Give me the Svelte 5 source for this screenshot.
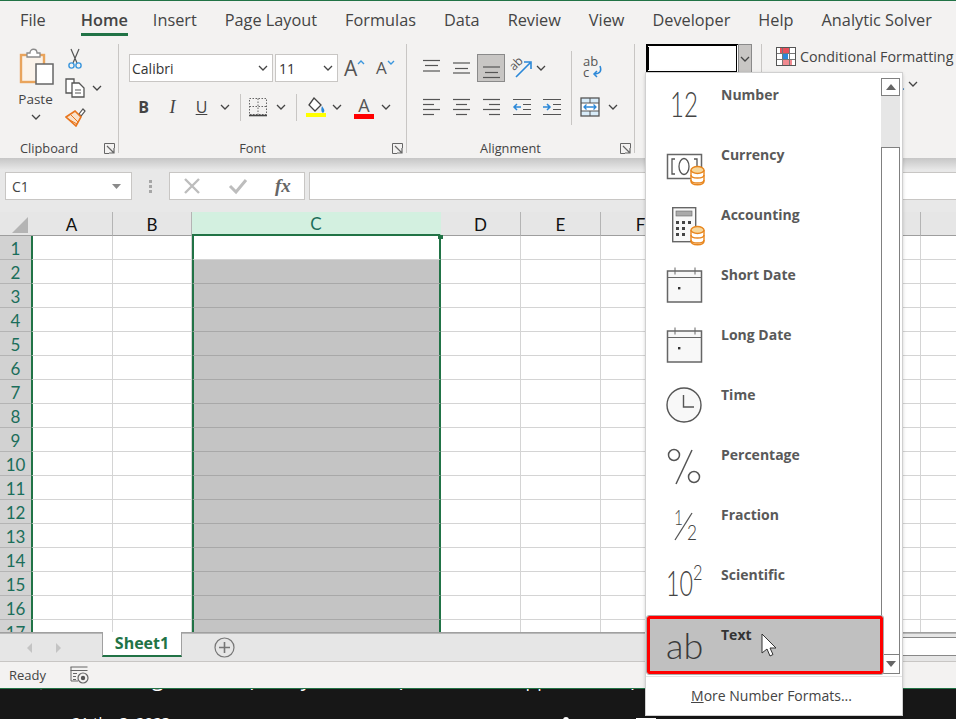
<script>
  const tabs = ['File', 'Home', 'Insert', 'Page Layout', 'Formulas', 'Data', 'Review', 'View', 'Developer', 'Help', 'Analytic Solver'];
  const cols = ['A', 'B', 'C', 'D', 'E', 'F', 'G', 'H', 'I', 'J'];
  const rows = Array.from({ length: 17 }, (_, i) => i + 1);
  const formats = ['Number', 'Currency', 'Accounting', 'Short Date', 'Long Date', 'Time', 'Percentage', 'Fraction', 'Scientific', 'Text'];

  // alignment icons: [x1, x2, y]
  const alignTop = [[2, 19, 2.5], [4, 17, 7.5], [2, 19, 13]];
  const alignMid = [[2, 19, 5], [4, 17, 10.5], [2, 19, 15]];
  const alignBot = [[2, 19, 9], [4, 17, 14.5], [2, 19, 19.5]];
  const left = [[2, 19, 2.5], [2, 13, 7.5], [2, 19, 12.5], [2, 13, 17.5]];
  const center = [[2, 19, 2.5], [5, 16, 7.5], [2, 19, 12.5], [5, 16, 17.5]];
  const right = [[2, 19, 2.5], [8, 19, 7.5], [2, 19, 12.5], [8, 19, 17.5]];
</script>

{#snippet chev()}
  <svg class="chev" width="10" height="6" viewBox="0 0 10 6"><path d="M1 1l4 4 4-4" fill="none" stroke="#444" stroke-width="1.3" /></svg>
{/snippet}

{#snippet launcher()}
  <svg width="11" height="11" viewBox="0 0 11 11" fill="none" stroke="#666"><path d="M10.5 5V.5H.5v10H5" /><path d="M3 3l6.5 6.5M10 5v5H5" stroke-width="1.2" /></svg>
{/snippet}

{#snippet bars(list)}
  <svg width="21" height="21" viewBox="0 0 21 21" stroke="#555" stroke-width="1.2">
    {#each list as b}<line x1={b[0]} x2={b[1]} y1={b[2]} y2={b[2]} />{/each}
  </svg>
{/snippet}

{#snippet coins()}
  <g stroke="#e8861e" stroke-width="1.4" fill="#fff">
    <path d="M37 36v11c0 5 13 5 13 0V36" />
    <path d="M37 41c0 4 13 4 13 0M37 46c0 4 13 4 13 0" fill="none" />
    <ellipse cx="43.5" cy="36" rx="6.5" ry="3.5" fill="#f6d79c" />
  </g>
{/snippet}

{#snippet calendar()}
  <g stroke="#666" fill="none">
    <rect x="13.5" y="17" width="34" height="31" fill="#f8f8f8" stroke-width="1.5" />
    <path d="M13 23.5h35M21 13.5v7M41 13.5v7" />
    <rect x="24" y="33" width="2.4" height="2.4" fill="#333" stroke="none" />
  </g>
{/snippet}

<div class="page">
  <div class="topline"></div>

  <nav class="tabs">
    {#each tabs as t}
      <span class="tab" class:active={t === 'Home'}>{t}</span>
    {/each}
  </nav>

  <div class="ribbon">
    <section class="group clipboard">
      <div class="clipbody">
        <div class="paste">
          <svg width="36" height="37" viewBox="0 0 36 37">
            <rect x="2" y="7" width="23" height="27" fill="#fbf3ea" stroke="#e9a45c" stroke-width="2.4" />
            <path d="M8 9V5h3c0-5 7-5 7 0h3v4z" fill="#fff" stroke="#8a8a8a" stroke-width="1.3" />
            <rect x="17" y="16" width="17" height="20" fill="#fff" stroke="#666" stroke-width="1.5" />
          </svg>
          <span class="pastelabel">Paste</span>
          {@render chev()}
        </div>
        <div class="smalls">
          <div class="small">
            <svg width="20" height="22" viewBox="0 0 20 22" fill="none">
              <path d="M6 1l6 14M14 1L8 15" stroke="#555" stroke-width="1.2" />
              <circle cx="6.5" cy="17.5" r="2.6" stroke="#3a96dd" stroke-width="1.4" />
              <circle cx="13.5" cy="17.5" r="2.6" stroke="#3a96dd" stroke-width="1.4" />
            </svg>
          </div>
          <div class="small">
            <svg width="20" height="20" viewBox="0 0 20 20" fill="#fff" stroke="#555" stroke-width="1.3">
              <path d="M1 1h8v14H1z" />
              <path d="M7 5h7l5 5v9H7z" />
              <path d="M10 12h6M10 15h6" stroke-width="1" />
            </svg>
            <span class="copychev">{@render chev()}</span>
          </div>
          <div class="small">
            <svg width="21" height="20" viewBox="0 0 21 20">
              <path d="M14 7l4-5 2 2-4 5z" fill="#fff" stroke="#555" stroke-width="1.2" />
              <path d="M1 10l9-6 6 6-5 9z" fill="#f9e3cd" stroke="#e8761e" stroke-width="1.6" />
              <path d="M3 12l9 5M6 8l7 7" stroke="#e8761e" />
            </svg>
          </div>
        </div>
      </div>
      <footer><span>Clipboard</span><i>{@render launcher()}</i></footer>
    </section>

    <section class="group font">
      <div class="grouprows">
        <div class="row">
          <div class="combo fontname"><span>Calibri</span>{@render chev()}</div>
          <div class="combo fontsize"><span>11</span>{@render chev()}</div>
          <span class="growa big">A<svg width="8" height="5" viewBox="0 0 8 5"><path d="M1 4l3-3 3 3" fill="none" stroke="#3a96dd" stroke-width="1.4" /></svg></span>
          <span class="growa smallA">A<svg width="8" height="5" viewBox="0 0 8 5"><path d="M1 1l3 3 3-3" fill="none" stroke="#3a96dd" stroke-width="1.4" /></svg></span>
        </div>
        <div class="row">
          <span class="btn b29 bold">B</span>
          <span class="btn b29 ital">I</span>
          <span class="btn b29 under">U</span>
          <span class="btn b18">{@render chev()}</span>
          <span class="sep s240"></span>
          <span class="btn b24">
            <svg width="20" height="20" viewBox="0 0 20 20" fill="none" stroke="#666"><path d="M1.5 1.5h17v16h-17zM10 1.5v16M1.5 9.5h17" stroke-dasharray="1.5 1.5" /><path d="M1 18.5h18" stroke-width="1.6" stroke="#444" /></svg>
          </span>
          <span class="btn b22">{@render chev()}</span>
          <span class="sep s296"></span>
          <span class="btn b32 fill">
            <svg width="20" height="20" viewBox="0 0 20 20"><path d="M8 1l7 7-6 6-6-6z" fill="#fff" stroke="#444" stroke-width="1.3" /><path d="M16 9c2 3 3 4 2 6s-4 0-2-6z" fill="#2b88d8" /><rect y="16" width="20" height="4" fill="#ffff00" /></svg>
          </span>
          <span class="btn b10">{@render chev()}</span>
          <span class="btn b28 color">A<i></i></span>
          <span class="btn b16">{@render chev()}</span>
        </div>
      </div>
      <footer><span>Font</span><i>{@render launcher()}</i></footer>
    </section>

    <section class="group alignment">
      <div class="grouprows">
        <div class="row">
          <span class="btn b30">{@render bars(alignTop)}</span>
          <span class="btn b30">{@render bars(alignMid)}</span>
          <span class="btn b30 pressed">{@render bars(alignBot)}</span>
          <span class="btn b30">
            <svg width="22" height="22" viewBox="0 0 22 22" fill="none"><path d="M6 20L20 6M14 5h7v7" stroke="#2b88d8" stroke-width="1.6" /><text x="0" y="11" transform="rotate(-45 6 8)" class="orient">ab</text></svg>
          </span>
          <span class="btn b10">{@render chev()}</span>
          <span class="sep s571"></span>
          <span class="btn b28">
            <svg width="22" height="24" viewBox="0 0 22 24"><text x="2" y="10" class="wraptxt">ab</text><text x="2" y="21" class="wraptxt">c</text><path d="M19 10c2 5 0 8-6 8M16 15l-3 3 3 3" fill="none" stroke="#2b88d8" stroke-width="1.5" /></svg>
          </span>
        </div>
        <div class="row">
          <span class="btn b30">{@render bars(left)}</span>
          <span class="btn b30">{@render bars(center)}</span>
          <span class="btn b30">{@render bars(right)}</span>
          <span class="btn b31">
            <svg width="20" height="20" viewBox="0 0 20 20" fill="none" stroke="#555" stroke-width="1.2"><path d="M1 2.5h18M11 7.5h8M11 12.5h8M1 17.5h18" /><path d="M9 10H2M5 7l-3 3 3 3" stroke="#2b88d8" stroke-width="1.5" /></svg>
          </span>
          <span class="btn b30">
            <svg width="20" height="20" viewBox="0 0 20 20" fill="none" stroke="#555" stroke-width="1.2"><path d="M1 2.5h18M11 7.5h8M11 12.5h8M1 17.5h18" /><path d="M1 10h7M5 7l3 3-3 3" stroke="#2b88d8" stroke-width="1.5" /></svg>
          </span>
          <span class="sep s572"></span>
          <span class="btn b26">
            <svg width="20" height="20" viewBox="0 0 20 20" fill="none"><rect x="1" y="1" width="18" height="18" fill="#d8ecf9" stroke="#555" stroke-width="1.3" /><rect x="2" y="6" width="16" height="8" fill="#fff" /><path d="M1 6h18M1 14h18M10 1v5M10 14v5" stroke="#555" /><path d="M4 10h12M6.5 7.5L4 10l2.5 2.5M13.5 7.5L16 10l-2.5 2.5" stroke="#2b88d8" stroke-width="1.3" /></svg>
          </span>
          <span class="btn b20">{@render chev()}</span>
        </div>
      </div>
      <footer><span>Alignment</span><i>{@render launcher()}</i></footer>
    </section>

    <section class="group number">
      <div class="numcombo">
        <div class="numinput"><span class="caret"></span></div>
        <div class="numdrop">{@render chev()}</div>
      </div>
    </section>

    <section class="styles">
      <div class="condrow">
        <svg width="20" height="19" viewBox="0 0 20 19">
          <rect x=".5" y=".5" width="19" height="18" fill="#fff" stroke="#555" />
          <rect x="4" y="1" width="9" height="5" fill="#e8505b" />
          <rect x="7" y="7" width="5" height="5" fill="#2b88d8" />
          <rect x="7" y="13" width="9" height="5" fill="#f08a90" />
          <path d="M1 6.5h18M1 12.5h18M6.5 1v17M13.5 1v17" stroke="#777" fill="none" />
        </svg>
        <span>Conditional Formatting</span>
      </div>
      <div class="stylerow"><span>.</span>{@render chev()}</div>
    </section>
  </div>

  <div class="formulabar">
    <div class="namebox">
      <span>C1</span>
      <svg width="9" height="5" viewBox="0 0 9 5"><path d="M0 0h9L4.5 5z" fill="#8a8a8a" /></svg>
    </div>
    <div class="grip"><i></i><i></i><i></i></div>
    <div class="fxbox">
      <svg width="18" height="18" viewBox="0 0 18 18"><path d="M2 2l14 14M16 2L2 16" stroke="#bdbdbd" stroke-width="2.4" /></svg>
      <svg width="20" height="18" viewBox="0 0 20 18"><path d="M2 9l6 6L18 3" fill="none" stroke="#bdbdbd" stroke-width="3" /></svg>
      <span class="fx">fx</span>
    </div>
    <div class="formula"></div>
  </div>

  <div class="sheet">
    <div class="head corner"><svg width="17" height="17" viewBox="0 0 17 17"><path d="M16 0v16H0z" fill="#b4b4b4" /></svg></div>
    {#each cols as c}
      <div class="head" class:sel={c === 'C'}>{c}</div>
    {/each}
    {#each rows as r}
      <div class="rowhead">{r}</div>
      {#each cols as c}
        <div
          class="cell"
          class:first={c === 'A'}
          class:colc={c === 'C'}
          class:filled={c === 'C' && r > 1}
        >
          {#if c === 'C' && r === 1}<span class="handle"></span>{/if}
        </div>
      {/each}
    {/each}
  </div>

  <div class="sheetbar">
    <div class="navs">
      <svg width="7" height="12" viewBox="0 0 7 12"><path d="M6 1v10L1 6z" fill="#c4c4c4" /></svg>
      <svg width="7" height="12" viewBox="0 0 7 12"><path d="M1 1v10l5-5z" fill="#c4c4c4" /></svg>
    </div>
    <div class="sheettab">Sheet1</div>
    <svg class="plus" width="21" height="21" viewBox="0 0 21 21" fill="none" stroke="#777"><circle cx="10.5" cy="10.5" r="9.5" stroke-width="1.2" /><path d="M10.5 5v11M5 10.5h11" stroke-width="1.6" /></svg>
    <div class="hscroll"></div>
  </div>

  <div class="status">
    <span>Ready</span>
    <svg width="19" height="18" viewBox="0 0 19 18" fill="none" stroke="#666"><path d="M.5 1h17M.5 4.5h17M1 1v14h7" /><path d="M3 7.5h4M3 10.5h3M3 13.5h3" /><circle cx="13" cy="12" r="5" fill="#f3f2f1" stroke-width="1.2" /><circle cx="13" cy="12" r="2.2" fill="#555" stroke="none" /></svg>
  </div>

  <div class="behind">
    <p class="clipped">r Hiện số 0 trong Excel? bạn này có thể bạn chưa biết || Thủ thuật Excel</p>
    <div class="date">
      <span>21 thg 3, 2023</span>
      <i class="peak"></i>
      <i class="box"></i>
    </div>
  </div>

  <div class="popup">
    <div class="popbody">
      <ul>
        {#each formats as f, i}
          <li class:hot={f === 'Text'}>
            <svg width="60" height="60" viewBox="0 0 60 60">
              {#if i === 0}
                <text x="16" y="43" class="glyph g36" textLength="28" lengthAdjust="spacingAndGlyphs">12</text>
              {:else if i === 1}
                <rect x="13.5" y="20.5" width="34" height="24" fill="#fff" stroke="#666" stroke-width="1.5" />
                <path d="M21 25h-3v15h3M40 25h3v15h-3" fill="none" stroke="#555" stroke-width="1.3" />
                <ellipse cx="30" cy="32.5" rx="5" ry="8" fill="none" stroke="#555" stroke-width="1.3" />
                {@render coins()}
              {:else if i === 2}
                <rect x="18.7" y="13.7" width="23" height="34" fill="#f8f8f8" stroke="#666" stroke-width="1.4" />
                <rect x="22" y="17" width="16" height="5" fill="#aaa" stroke="#666" stroke-width=".6" />
                <path d="M22 27h3v3h-3zM28 27h3v3h-3zM34 27h3v3h-3zM22 33h3v3h-3zM28 33h3v3h-3zM22 39h3v3h-3zM28 39h3v3h-3z" fill="#444" />
                {@render coins()}
              {:else if i === 3 || i === 4}
                {@render calendar()}
              {:else if i === 5}
                <circle cx="30" cy="31" r="17" fill="#f8f8f8" stroke="#555" stroke-width="1.4" />
                <path d="M29.5 21v12H40" fill="none" stroke="#555" stroke-width="1.4" />
              {:else if i === 6}
                <circle cx="20" cy="21" r="5.5" fill="none" stroke="#555" stroke-width="1.5" />
                <circle cx="40" cy="43" r="5.5" fill="none" stroke="#555" stroke-width="1.5" />
                <path d="M38 16L22 50" stroke="#555" stroke-width="1.5" />
              {:else if i === 7}
                <text x="20" y="31" class="glyph g22" textLength="9" lengthAdjust="spacingAndGlyphs">1</text>
                <path d="M38 19L21 46" stroke="#555" stroke-width="1.3" />
                <text x="33" y="46" class="glyph g22" textLength="10" lengthAdjust="spacingAndGlyphs">2</text>
              {:else if i === 8}
                <text x="12" y="42" class="glyph g36" textLength="27" lengthAdjust="spacingAndGlyphs">10</text>
                <text x="39" y="26" class="glyph g22" textLength="9.5" lengthAdjust="spacingAndGlyphs">2</text>
              {:else}
                <text x="13" y="45" class="glyph g36 dark">ab</text>
              {/if}
            </svg>
            <span>{f}</span>
            {#if f === 'Text'}
              <svg class="cursor" width="16" height="25" viewBox="0 0 16 25"><path d="M1 1v19l5-4 3 7 3-1.5-3-6.5h6z" fill="#fff" stroke="#333" /></svg>
            {/if}
          </li>
        {/each}
      </ul>
      <div class="vscroll">
        <div class="sbtn"><svg width="10" height="6" viewBox="0 0 10 6"><path d="M0 6l5-6 5 6z" fill="#666" /></svg></div>
        <div class="strack"></div>
        <div class="sthumb"></div>
        <div class="sbtn down"><svg width="10" height="6" viewBox="0 0 10 6"><path d="M0 0l5 6 5-6z" fill="#666" /></svg></div>
      </div>
    </div>
    <div class="more"><u>M</u>ore Number Formats...</div>
  </div>
</div>

<style>
  :global(body) {
    margin: 0;
    background: #171717;
  }
  .page {
    position: relative;
    width: 956px;
    height: 719px;
    overflow: hidden;
    display: flex;
    flex-direction: column;
    font-family: "Open Sans", "Liberation Sans", sans-serif;
    color: #444;
  }
  .topline {
    height: 2px;
    flex: none;
    background: linear-gradient(#217346 50%, #f3f2f1 50%);
  }

  /* tabs */
  .tabs {
    flex: none;
    height: 36px;
    display: flex;
    gap: 28px;
    padding-left: 20px;
    background: #f3f2f1;
    font-size: 16.3px;
    line-height: 36px;
    white-space: nowrap;
  }
  .tab {
    height: 34px;
  }
  .tab.active {
    font-weight: 600;
    color: #444;
    border-bottom: 3px solid #217346;
    box-sizing: border-box;
    margin: 0 -3px 0 7px;
  }

  /* ribbon */
  .ribbon {
    flex: none;
    height: 120px;
    box-sizing: border-box;
    padding-top: 6px;
    display: flex;
    background: #f3f2f1;
    font-size: 14px;
  }
  .group {
    flex: none;
    box-sizing: border-box;
    height: 109px;
    border-right: 1px solid #c8c6c4;
    display: flex;
    flex-direction: column;
  }
  .clipboard { width: 119px; }
  .font { width: 288px; padding-left: 10px; }
  .alignment { width: 228px; padding-left: 9px; }
  .number { width: 127px; padding-left: 11px; }
  .group footer {
    margin-top: auto;
    margin-bottom: -3px;
    display: flex;
    align-items: center;
    height: 16px;
    font-size: 12.8px;
  }
  .font footer { margin-left: -10px; }
  .alignment footer { margin-left: -9px; }
  .group footer span {
    flex: 1;
    text-align: center;
  }
  .group footer i {
    width: 20px;
    display: flex;
    padding-left: 6px;
    box-sizing: border-box;
  }
  .chev {
    flex: none;
    display: block;
  }

  .clipbody {
    display: flex;
    padding-left: 19px;
  }
  .paste {
    width: 36px;
    padding-top: 4px;
    display: flex;
    flex-direction: column;
    align-items: center;
  }
  .pastelabel {
    margin: 6px 3px 0 0;
    line-height: 16px;
    font-size: 13.5px;
  }
  .paste .chev {
    margin: 7px 3px 0 0;
  }
  .smalls {
    margin-left: 10px;
  }
  .small {
    height: 29px;
    display: flex;
    align-items: center;
    position: relative;
  }
  .copychev {
    margin-left: 7px;
  }

  .grouprows {
    padding-top: 10px;
    display: flex;
    flex-direction: column;
    gap: 11px;
  }
  .row {
    height: 28px;
    display: flex;
    align-items: center;
  }
  .combo {
    box-sizing: border-box;
    height: 28px;
    background: #fff;
    border: 1px solid #c8c6c4;
    display: flex;
    align-items: center;
    justify-content: space-between;
    padding: 0 4px 0 2px;
    font-size: 14px;
    color: #333;
  }
  .fontname { width: 144px; margin-right: 2px; }
  .fontsize { width: 63px; padding-left: 3px; }
  .growa {
    display: flex;
    line-height: 28px;
    color: #555;
    align-items: flex-start;
  }
  .growa svg { margin-top: 6px; }
  .big { font-size: 21px; margin-left: 6px; width: 32px; }
  .smallA { font-size: 17px; }
  .btn {
    flex: none;
    height: 28px;
    box-sizing: border-box;
    display: flex;
    align-items: center;
    justify-content: center;
  }
  .b10 { width: 10px; }
  .b16 { width: 16px; }
  .b18 { width: 18px; }
  .b20 { width: 20px; }
  .b22 { width: 22px; }
  .b24 { width: 24px; }
  .b26 { width: 26px; }
  .b28 { width: 28px; }
  .b29 { width: 29px; }
  .b30 { width: 30px; }
  .b31 { width: 31px; }
  .b32 { width: 32px; }
  .bold { font-weight: 700; font-size: 16px; }
  .ital { font-family: "Liberation Serif", serif; font-style: italic; font-size: 18px; }
  .under { text-decoration: underline; font-size: 16px; }
  .sep {
    flex: none;
    width: 1px;
    height: 27px;
    background: #c8c6c4;
  }
  .s240 { margin: 0 5px 0 6px; }
  .s296 { margin: 0 3px 0 4px; }
  .s571 {
    margin: -3px 6px 0 25px;
    height: 74px;
    align-self: flex-start;
  }
  .s572 { margin: 0 4px 0 5px; visibility: hidden; }
  .color {
    margin-left: 8px;
    flex-direction: column;
    font-size: 18px;
    line-height: 18px;
    color: #555;
  }
  .color i {
    width: 20px;
    height: 5px;
    background: #ff0000;
  }
  .pressed {
    background: #c8c6c4;
    border: 1px solid #8a8a8a;
    width: 28px;
    margin: 0 1px;
  }
  .orient {
    font-size: 12px;
    fill: #555;
  }
  .wraptxt {
    font-size: 13px;
    fill: #555;
  }

  .numcombo {
    margin-top: 0;
    display: flex;
    height: 29px;
    width: 106px;
  }
  .numinput {
    box-sizing: border-box;
    width: 92px;
    background: #fff;
    border: 1px solid #000;
    border-right: 0;
    display: flex;
    align-items: center;
    padding-left: 1px;
    outline: 1px solid #000;
    outline-offset: -2px;
  }
  .caret {
    width: 1px;
    height: 23px;
    background: #000;
  }
  .numdrop {
    width: 14px;
    background: #c8c6c4;
    border: 1px solid #8a8a8a;
    box-sizing: border-box;
    display: flex;
    align-items: center;
    justify-content: center;
  }
  .styles {
    flex: 1;
    min-width: 0;
    padding: 2px 0 0 14px;
    overflow: hidden;
  }
  .condrow {
    display: flex;
    align-items: center;
    gap: 4px;
    white-space: nowrap;
    height: 20px;
    font-size: 14.3px;
  }
  .stylerow {
    margin-top: 11px;
    padding-left: 125px;
    display: flex;
    align-items: center;
    gap: 3px;
    height: 14px;
  }

  /* formula bar */
  .formulabar {
    flex: none;
    height: 54px;
    box-sizing: border-box;
    padding-top: 14px;
    display: flex;
    align-items: flex-start;
    background: linear-gradient(#c6c6c6, #e8e8e8 12px);
  }
  .namebox, .fxbox, .formula {
    box-sizing: border-box;
    height: 28px;
    background: #fff;
    border: 1px solid #c8c6c4;
    display: flex;
    align-items: center;
  }
  .namebox {
    width: 127px;
    margin-left: 5px;
    padding: 0 10px 0 6px;
    justify-content: space-between;
    font-size: 14px;
  }
  .grip {
    width: 37px;
    height: 28px;
    display: flex;
    flex-direction: column;
    align-items: center;
    justify-content: center;
    gap: 2px;
  }
  .grip i {
    width: 3px;
    height: 3px;
    background: #a6a6a6;
  }
  .fxbox {
    width: 136px;
    padding-left: 13px;
    gap: 27px;
  }
  .fx {
    font-family: "Liberation Serif", serif;
    font-style: italic;
    font-weight: 700;
    font-size: 19px;
    color: #666;
  }
  .formula {
    flex: 1;
    margin-left: 4px;
    border-right: 0;
  }

  /* sheet */
  .sheet {
    flex: 1;
    min-height: 0;
    overflow: hidden;
    display: grid;
    grid-template-columns: 31px 82px 79px 249px repeat(7, 80px);
    grid-auto-rows: 24px;
    background: #fff;
    font-family: Lato, "Liberation Sans", sans-serif;
    font-size: 17px;
  }
  .head {
    box-sizing: border-box;
    background: #e6e6e6;
    border-right: 1px solid #b4b4b4;
    border-bottom: 1px solid #9e9e9e;
    color: #111;
    display: flex;
    align-items: center;
    justify-content: center;
    padding-top: 1px;
  }
  .corner {
    justify-content: flex-end;
    padding: 3px 2px 0 0;
    border-right: 0;
  }
  .head.sel {
    background: #d3f0e0;
    color: #1b6e5a;
    border-bottom: 2px solid #217346;
    border-right-color: #d3f0e0;
  }
  .rowhead {
    box-sizing: border-box;
    background: #d2d2d2;
    border-bottom: 1px solid #b4b4b4;
    color: #1b6e5a;
    display: flex;
    align-items: center;
    justify-content: center;
    padding-top: 1px;
  }
  .cell {
    box-sizing: border-box;
    border-right: 1px solid #d4d4d4;
    border-bottom: 1px solid #d4d4d4;
    position: relative;
  }
  .first {
    border-left: 2px solid #217346;
  }
  .colc {
    border-left: 2px solid #217346;
    border-right: 2px solid #217346;
    z-index: 1;
  }
  .filled {
    background: #c4c4c4;
    border-bottom-color: #a8a8a8;
  }
  .handle {
    position: absolute;
    right: -4px;
    top: -1px;
    width: 5px;
    height: 4px;
    background: #217346;
  }

  /* sheet tabs and status */
  .sheetbar {
    flex: none;
    height: 29px;
    box-sizing: border-box;
    background: #e6e6e6;
    border-top: 1px solid #a0a0a0;
    box-shadow: inset 0 1px #b8b8b8;
    display: flex;
    align-items: flex-start;
  }
  .navs {
    width: 102px;
    box-sizing: border-box;
    padding: 9px 0 0 26px;
    display: flex;
    gap: 22px;
  }
  .sheettab {
    box-sizing: border-box;
    width: 80px;
    height: 25px;
    margin-top: -1px;
    background: #fff;
    border-left: 1px solid #a0a0a0;
    border-right: 1px solid #a0a0a0;
    border-bottom: 2px solid #217346;
    color: #217346;
    font-weight: 700;
    font-size: 16px;
    line-height: 23px;
    text-align: center;
  }
  .plus {
    margin: 4px 0 0 32px;
  }
  .hscroll {
    margin: 4px 0 0 auto;
    width: 90px;
    height: 19px;
    box-sizing: border-box;
    background: #fff;
    border-top: 1px solid #888;
    border-bottom: 1px solid #888;
  }
  .status {
    flex: none;
    height: 28px;
    box-sizing: border-box;
    background: #f3f2f1;
    border-top: 1px solid #c8c6c4;
    border-bottom: 1px solid #217346;
    display: flex;
    align-items: center;
    gap: 24px;
    padding-left: 9px;
    font-size: 13px;
  }
  .behind {
    flex: none;
    height: 30px;
    background: #171717;
    color: #fff;
    overflow: hidden;
  }
  .clipped {
    margin: -24px 0 0;
    font-size: 21px;
    line-height: 27px;
    white-space: nowrap;
  }
  .date {
    margin: 20px 0 0 72px;
    font-size: 15px;
    line-height: 20px;
    display: flex;
    align-items: flex-start;
  }
  .peak {
    width: 6px;
    height: 6px;
    margin: 5px 0 0 393px;
    background: #fff;
    border-radius: 3px;
  }
  .box {
    width: 20px;
    height: 10px;
    margin: 6px 0 0 67px;
    box-sizing: border-box;
    border: 1px solid #fff;
  }

  /* number format menu */
  .popup {
    position: absolute;
    left: 646px;
    top: 73px;
    width: 256px;
    height: 642px;
    background: #fff;
    box-shadow: 0 0 0 1px #d0d0d0, 0 1px 4px rgba(0, 0, 0, 0.3);
    display: flex;
    flex-direction: column;
    z-index: 3;
  }
  .popbody {
    display: flex;
    height: 601px;
    flex: none;
    padding-top: 1px;
  }
  ul {
    list-style: none;
    margin: 0;
    padding: 0;
    width: 235px;
    flex: none;
  }
  li {
    height: 60px;
    box-sizing: border-box;
    display: flex;
    padding-left: 8px;
    position: relative;
  }
  li span {
    margin-left: 7px;
    font-size: 14px;
    font-weight: 700;
    line-height: 20px;
    padding-top: 11px;
    color: #595959;
  }
  .hot {
    margin: 2px -2px 0 1px;
    height: 58px;
    border: 3px solid #ff0000;
    border-radius: 2px;
    outline: 1px solid #aaa;
    background: #c0c0c0;
    padding-left: 3px;
    z-index: 2;
  }
  .hot svg:first-child {
    margin-top: -5px;
  }
  .hot span {
    padding-top: 6px;
    margin-left: 8px;
    color: #333;
  }
  .cursor {
    position: absolute;
    left: 111px;
    top: 14px;
  }
  .glyph {
    font-family: Lato, "Open Sans", sans-serif;
    font-weight: 300;
    fill: #444;
  }
  .g36 { font-size: 36px; }
  .g22 { font-size: 22px; }
  .dark { fill: #3a3a3a; }

  .vscroll {
    width: 19px;
    margin-top: 4px;
    height: 596px;
    display: flex;
    flex-direction: column;
    flex: none;
  }
  .sbtn {
    flex: none;
    height: 18px;
    box-sizing: border-box;
    border: 1px solid #808080;
    display: flex;
    align-items: center;
    justify-content: center;
  }
  .sbtn.down {
    height: 20px;
  }
  .strack {
    height: 51px;
    flex: none;
    background: #e6e6e6;
  }
  .sthumb {
    flex: 1;
    box-sizing: border-box;
    border: 1px solid #808080;
    border-bottom: 0;
  }
  .more {
    flex: 1;
    margin-top: 1px;
    border-top: 1px solid #e4e4e4;
    font-size: 14px;
    text-align: center;
    line-height: 38px;
    padding-right: 5px;
  }
</style>
